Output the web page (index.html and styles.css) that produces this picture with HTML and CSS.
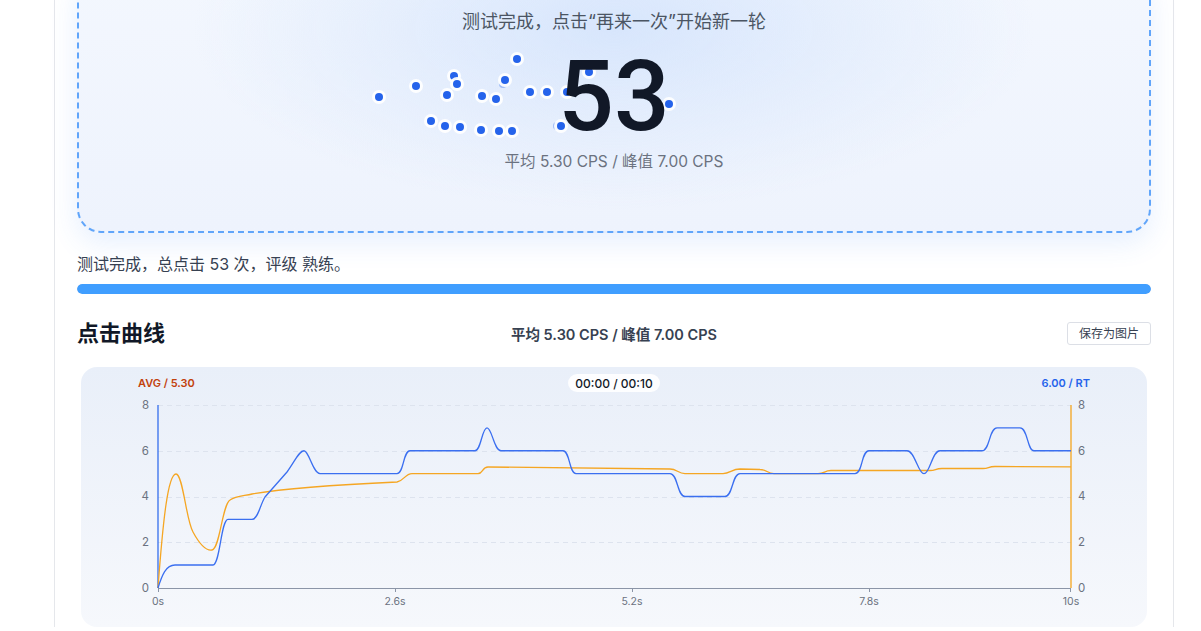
FILE: index.html
```html
<!DOCTYPE html>
<html lang="zh-CN">
<head>
<meta charset="utf-8">
<title>点击测试</title>
<link rel="stylesheet" href="styles.css">
</head>
<body>
<div class="page">
  <section class="hero">
    <div class="dots">
      <span class="dot" style="left:296px;top:121px"></span>
      <span class="dot" style="left:333px;top:110px"></span>
      <span class="dot" style="left:371px;top:100px"></span>
      <span class="dot" style="left:374px;top:108px"></span>
      <span class="dot" style="left:364px;top:119px"></span>
      <span class="dot" style="left:434px;top:83px"></span>
      <span class="dot ghost" style="left:420px;top:108px"></span>
      <span class="dot" style="left:422px;top:104px"></span>
      <span class="dot" style="left:399px;top:120px"></span>
      <span class="dot" style="left:413px;top:123px"></span>
      <span class="dot" style="left:447px;top:116px"></span>
      <span class="dot" style="left:464px;top:116px"></span>
      <span class="dot" style="left:348px;top:145px"></span>
      <span class="dot" style="left:362px;top:150px"></span>
      <span class="dot ghost" style="left:379px;top:151px"></span>
      <span class="dot" style="left:377px;top:151px"></span>
      <span class="dot" style="left:398px;top:154px"></span>
      <span class="dot" style="left:416px;top:155px"></span>
      <span class="dot" style="left:429px;top:155px"></span>
      <span class="dot ghost" style="left:474px;top:150px"></span>
      <span class="dot" style="left:478px;top:150px"></span>
      <span class="dot" style="left:484px;top:116px"></span>
      <span class="dot" style="left:506px;top:96px"></span>
      <span class="dot ghost" style="left:584px;top:127px"></span>
      <span class="dot" style="left:586px;top:128px"></span>
    </div>
    <p class="hero-title">测试完成，点击“再来一次”开始新一轮</p>
    <div class="hero-count">53</div>
    <p class="hero-sub">平均 5.30 CPS / 峰值 7.00 CPS</p>
  </section>

  <p class="status">测试完成，总点击 53 次，评级 熟练。</p>
  <div class="progress"><div class="progress-fill" style="width:100%"></div></div>

  <div class="chart-head">
    <h2 class="chart-title">点击曲线</h2>
    <span class="chart-stats">平均 5.30 CPS / 峰值 7.00 CPS</span>
    <button class="save-btn" type="button">保存为图片</button>
  </div>

  <div class="chart-panel">
    <svg class="chart" width="1066" height="260" viewBox="0 0 1066 260" xmlns="http://www.w3.org/2000/svg">
      <g transform="translate(-81,-367)">
        <g class="grid">
          <line x1="158" y1="405.5" x2="1071" y2="405.5"/>
          <line x1="158" y1="451.5" x2="1071" y2="451.5"/>
          <line x1="158" y1="497.5" x2="1071" y2="497.5"/>
          <line x1="158" y1="542.5" x2="1071" y2="542.5"/>
        </g>
        <line class="xaxis" x1="158" y1="588.5" x2="1071" y2="588.5"/>
        <g class="ticks">
          <line x1="158.5" y1="588" x2="158.5" y2="592"/>
          <line x1="395.5" y1="588" x2="395.5" y2="592"/>
          <line x1="632.5" y1="588" x2="632.5" y2="592"/>
          <line x1="869.5" y1="588" x2="869.5" y2="592"/>
          <line x1="1070.5" y1="588" x2="1070.5" y2="592"/>
        </g>
        <line class="axis-left" x1="158" y1="405" x2="158" y2="588"/>
        <line class="axis-right" x1="1071" y1="405" x2="1071" y2="588"/>

        <g class="ylabels-left">
          <text x="149" y="409">8</text>
          <text x="149" y="455">6</text>
          <text x="149" y="500">4</text>
          <text x="149" y="546">2</text>
          <text x="149" y="592">0</text>
        </g>
        <g class="ylabels-right">
          <text x="1078" y="409">8</text>
          <text x="1078" y="455">6</text>
          <text x="1078" y="500">4</text>
          <text x="1078" y="546">2</text>
          <text x="1078" y="592">0</text>
        </g>
        <g class="xlabels">
          <text x="158" y="605">0s</text>
          <text x="395" y="605">2.6s</text>
          <text x="632" y="605">5.2s</text>
          <text x="869" y="605">7.8s</text>
          <text x="1071" y="605">10s</text>
        </g>

        <path class="line-avg" d="M158,588 C163,520 168,474 176,474 C183,474 186,520 193,532 C200,545 206,551 212,550 C220,549 222,505 230,500 C236,496 244,496 252,494 C280,489 330,485 397,482 C404,481 405,473.6 412,473.6 L478,473.6 C483,473.6 482,467 488,467 L670,469 C677,469 678,473.6 685,473.6 L723,473.6 C730,473.6 732,469 740,469 L760,469.5 C767,469.5 767,473.6 774,473.6 L818,473.6 C825,473.6 824,470.5 831,470.5 L930,470.5 C936,470.5 935,468.5 942,468.5 L983,468.5 C989,468.5 988,466.5 995,466.5 L1071,466.8"/>
        <path class="line-rt" d="M158,588 C162,575 166,565 175,565 L213,565 C220,565 221,519.4 228,519.4 L252,519.4 C258,519.4 260,505 265,497 L287,472 C295,461 299,450.75 304,450.75 C309,450.75 313,473.6 320,473.6 L397,473.6 C404,473.6 403,450.75 410,450.75 L475,450.75 C481,450.75 482,427.9 487,427.9 C492,427.9 494,450.75 501,450.75 L563,450.75 C570,450.75 569,473.6 576,473.6 L670,473.6 C678,473.6 677,496.5 685,496.5 L725,496.5 C733,496.5 732,473.6 740,473.6 L855,473.6 C863,473.6 861,450.75 869,450.75 L907,450.75 C915,450.75 918,473.6 924,473.6 C930,473.6 932,450.75 940,450.75 L982,450.75 C990,450.75 989,427.9 997,427.9 L1020,427.9 C1028,427.9 1027,450.75 1034,450.75 L1071,450.75"/>

        <text class="lbl-avg" x="138" y="387">AVG / 5.30</text>
        <text class="lbl-rt" x="1090" y="387">6.00 / RT</text>
        <rect class="pill" x="568" y="374" width="92" height="18" rx="9"/>
        <text class="pill-text" x="614" y="387.5">00:00 / 00:10</text>
      </g>
    </svg>
  </div>
</div>
</body>
</html>
```

FILE: styles.css
```css
* { box-sizing: border-box; }

html, body {
  margin: 0;
  padding: 0;
  background: #ffffff;
  overflow: hidden;
}

body {
  font-family: Inter, "Noto Sans CJK SC", sans-serif;
  color: #111827;
}

.page {
  margin-left: 54px;
  width: 1120px;
  min-height: 631px;
  border-left: 1px solid #e5e7eb;
  border-right: 1px solid #e5e7eb;
  padding: 0 22px;
  background: #ffffff;
}

.hero {
  position: relative;
  margin-top: -30px;
  padding: 37px 0 59px;
  border: 2px dashed #60a5fa;
  border-radius: 24px;
  background:
    radial-gradient(ellipse 420px 180px at 50% 22%, rgba(214, 229, 252, 0.95) 0%, rgba(222, 234, 252, 0) 100%),
    linear-gradient(180deg, #f3f7fe 0%, #eef3fd 100%);
  box-shadow: 0 10px 28px rgba(59, 130, 246, 0.12);
  text-align: center;
}

.dots {
  position: absolute;
  inset: 0;
  pointer-events: none;
}

.dot {
  position: absolute;
  width: 8px;
  height: 8px;
  border-radius: 50%;
  background: #2563eb;
  box-shadow: 0 0 0 3px rgba(255, 255, 255, 0.92);
}

.dot.ghost {
  opacity: 0.35;
  box-shadow: none;
}

.hero-title {
  position: relative;
  margin: 0;
  font-size: 18px;
  line-height: 26px;
  color: #4b5563;
}

.hero-count {
  position: relative;
  z-index: 1;
  margin-top: 22px;
  font-family: Roboto, Inter, sans-serif;
  font-size: 98px;
  line-height: 80px;
  font-weight: 500;
  color: #111827;
}

.hero-sub {
  position: relative;
  margin: 15px 0 0;
  font-size: 15.5px;
  line-height: 20px;
  color: #6b7280;
}

.status {
  margin: 20px 0 0;
  font-size: 16px;
  line-height: 22px;
  color: #374151;
}

.progress {
  margin-top: 9px;
  height: 10px;
  border-radius: 5px;
  background: #e5e7eb;
  overflow: hidden;
}

.progress-fill {
  height: 100%;
  border-radius: 5px;
  background: #409eff;
}

.chart-head {
  margin-top: 24px;
  height: 30px;
  display: grid;
  grid-template-columns: 1fr auto 1fr;
  align-items: center;
}

.chart-title {
  margin: 0;
  font-size: 22px;
  line-height: 30px;
  font-weight: 700;
  color: #111827;
}

.chart-stats {
  font-size: 14.5px;
  font-weight: 600;
  color: #374151;
}

.save-btn {
  justify-self: end;
  height: 23px;
  padding: 0 11px;
  font-family: inherit;
  font-size: 12px;
  line-height: 21px;
  color: #374151;
  background: #ffffff;
  border: 1px solid #dcdfe6;
  border-radius: 3px;
}

.chart-panel {
  margin: 19px 4px 0;
  height: 260px;
  border-radius: 16px;
  overflow: hidden;
  background: linear-gradient(180deg, #e9eff9 0%, #f6f8fc 100%);
}

.chart {
  display: block;
  font-family: Inter, "Noto Sans CJK SC", sans-serif;
}

.grid line {
  stroke: #dde3ee;
  stroke-width: 1;
  stroke-dasharray: 5 4;
}

.xaxis { stroke: #8b95a7; stroke-width: 1; }
.ticks line { stroke: #8b95a7; stroke-width: 1; }
.axis-left { stroke: #2563eb; stroke-width: 1.2; }
.axis-right { stroke: #f59e0b; stroke-width: 1.2; }

.ylabels-left text { font-size: 11.5px; fill: #6b7280; text-anchor: end; }
.ylabels-right text { font-size: 11.5px; fill: #6b7280; text-anchor: start; }
.xlabels text { font-size: 10.5px; fill: #6b7280; text-anchor: middle; }

.line-rt { fill: none; stroke: #3b6ff0; stroke-width: 1.3; }
.line-avg { fill: none; stroke: #f5a623; stroke-width: 1.3; }

.lbl-avg { font-size: 11px; font-weight: 600; fill: #c2410c; }
.lbl-rt { font-size: 11px; font-weight: 600; fill: #2563eb; text-anchor: end; }
.pill { fill: rgba(255, 255, 255, 0.88); }
.pill-text { font-size: 12px; font-weight: 500; fill: #111827; text-anchor: middle; }
```
